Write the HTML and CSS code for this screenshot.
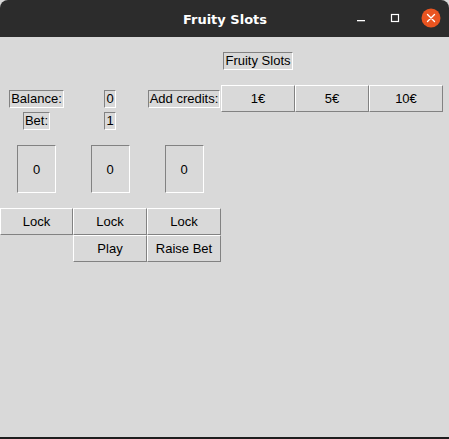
FILE: index.html
```
<!DOCTYPE html>
<html>
<head>
<meta charset="utf-8">
<title>Fruity Slots</title>
<link rel="stylesheet" href="styles.css">
</head>
<body>
<div class="window">
  <div class="titlebar">
    <span class="title">Fruity Slots</span>
    <div class="controls">
      <svg class="ctl" width="12" height="12" viewBox="0 0 12 12"><rect x="2" y="8" width="8" height="1.3" fill="#ffffff"/></svg>
      <svg class="ctl" width="12" height="12" viewBox="0 0 12 12"><rect x="2.5" y="2.5" width="7" height="7" fill="none" stroke="#ffffff" stroke-width="1.2"/></svg>
      <svg class="close" width="20" height="20" viewBox="0 0 20 20"><circle cx="10" cy="10" r="9.5" fill="#e95420"/><path d="M6.5 6.5 L13.5 13.5 M13.5 6.5 L6.5 13.5" stroke="#ffffff" stroke-width="1.4" stroke-linecap="round"/></svg>
    </div>
  </div>
  <div class="content">
    <div class="grid">
      <span class="label c4 r1">Fruity Slots</span>

      <span class="label c1 r2">Balance:</span>
      <span class="label c2 r2">0</span>
      <span class="label c3 r2">Add credits:</span>
      <button class="btn c4 r2">1€</button>
      <button class="btn c5 r2">5€</button>
      <button class="btn c6 r2">10€</button>

      <span class="label c1 r3">Bet:</span>
      <span class="label c2 r3">1</span>

      <span class="slot c1 r4">0</span>
      <span class="slot c2 r4">0</span>
      <span class="slot c3 r4">0</span>

      <button class="btn c1 r5">Lock</button>
      <button class="btn c2 r5">Lock</button>
      <button class="btn c3 r5">Lock</button>

      <button class="btn c2 r6">Play</button>
      <button class="btn c3 r6">Raise Bet</button>
    </div>
  </div>
</div>
</body>
</html>
```
FILE: styles.css
```
html, body {
  margin: 0;
  padding: 0;
  background: #d9d9d9;
}
.window {
  width: 449px;
  height: 439px;
  display: flex;
  flex-direction: column;
  background: #d9d9d9;
  border-bottom: 2px solid #1e1e1e;
  box-sizing: border-box;
  overflow: hidden;
}
.titlebar {
  height: 37px;
  flex: 0 0 37px;
  background: #2c2c2c;
  border-radius: 8px 8px 0 0;
  display: flex;
  align-items: center;
  justify-content: center;
  position: relative;
}
.title {
  font-family: "DejaVu Sans", sans-serif;
  font-weight: bold;
  font-size: 13px;
  color: #ffffff;
  margin-left: 1px;
  margin-top: 1px;
}
.controls {
  position: absolute;
  right: 8px;
  top: 8px;
  display: flex;
  align-items: center;
  gap: 22px;
}
.ctl {
  display: block;
}
.close {
  display: block;
  margin-left: -2px;
}
.content {
  flex: 1;
}
.grid {
  display: grid;
  grid-template-columns: 73px 74px 74px 74px 74px 74px;
  grid-template-rows: 48px 27px 18px 78px 27px 27px;
  font-family: "Liberation Sans", Arial, sans-serif;
  font-size: 13px;
  color: #000000;
}
.c1 { grid-column: 1; }
.c2 { grid-column: 2; }
.c3 { grid-column: 3; }
.c4 { grid-column: 4; }
.c5 { grid-column: 5; }
.c6 { grid-column: 6; }
.r1 { grid-row: 1; }
.r2 { grid-row: 2; }
.r3 { grid-row: 3; }
.r4 { grid-row: 4; }
.r5 { grid-row: 5; }
.r6 { grid-row: 6; }
.label {
  justify-self: center;
  align-self: center;
  height: 18px;
  box-sizing: border-box;
  line-height: 16px;
  padding: 0 1px;
  border: 1px solid;
  border-color: #828282 #ffffff #ffffff #828282;
  white-space: nowrap;
}
.slot {
  justify-self: center;
  align-self: center;
  width: 39px;
  height: 48px;
  box-sizing: border-box;
  border: 1px solid;
  border-color: #828282 #ffffff #ffffff #828282;
  display: flex;
  align-items: center;
  justify-content: center;
}
.btn {
  margin: 0;
  padding: 0;
  font: inherit;
  color: #000000;
  background: #d9d9d9;
  border: 1px solid;
  border-color: #ffffff #828282 #828282 #ffffff;
  border-radius: 0;
  width: 100%;
  height: 27px;
  box-sizing: border-box;
  text-align: center;
  line-height: 25px;
}
```
